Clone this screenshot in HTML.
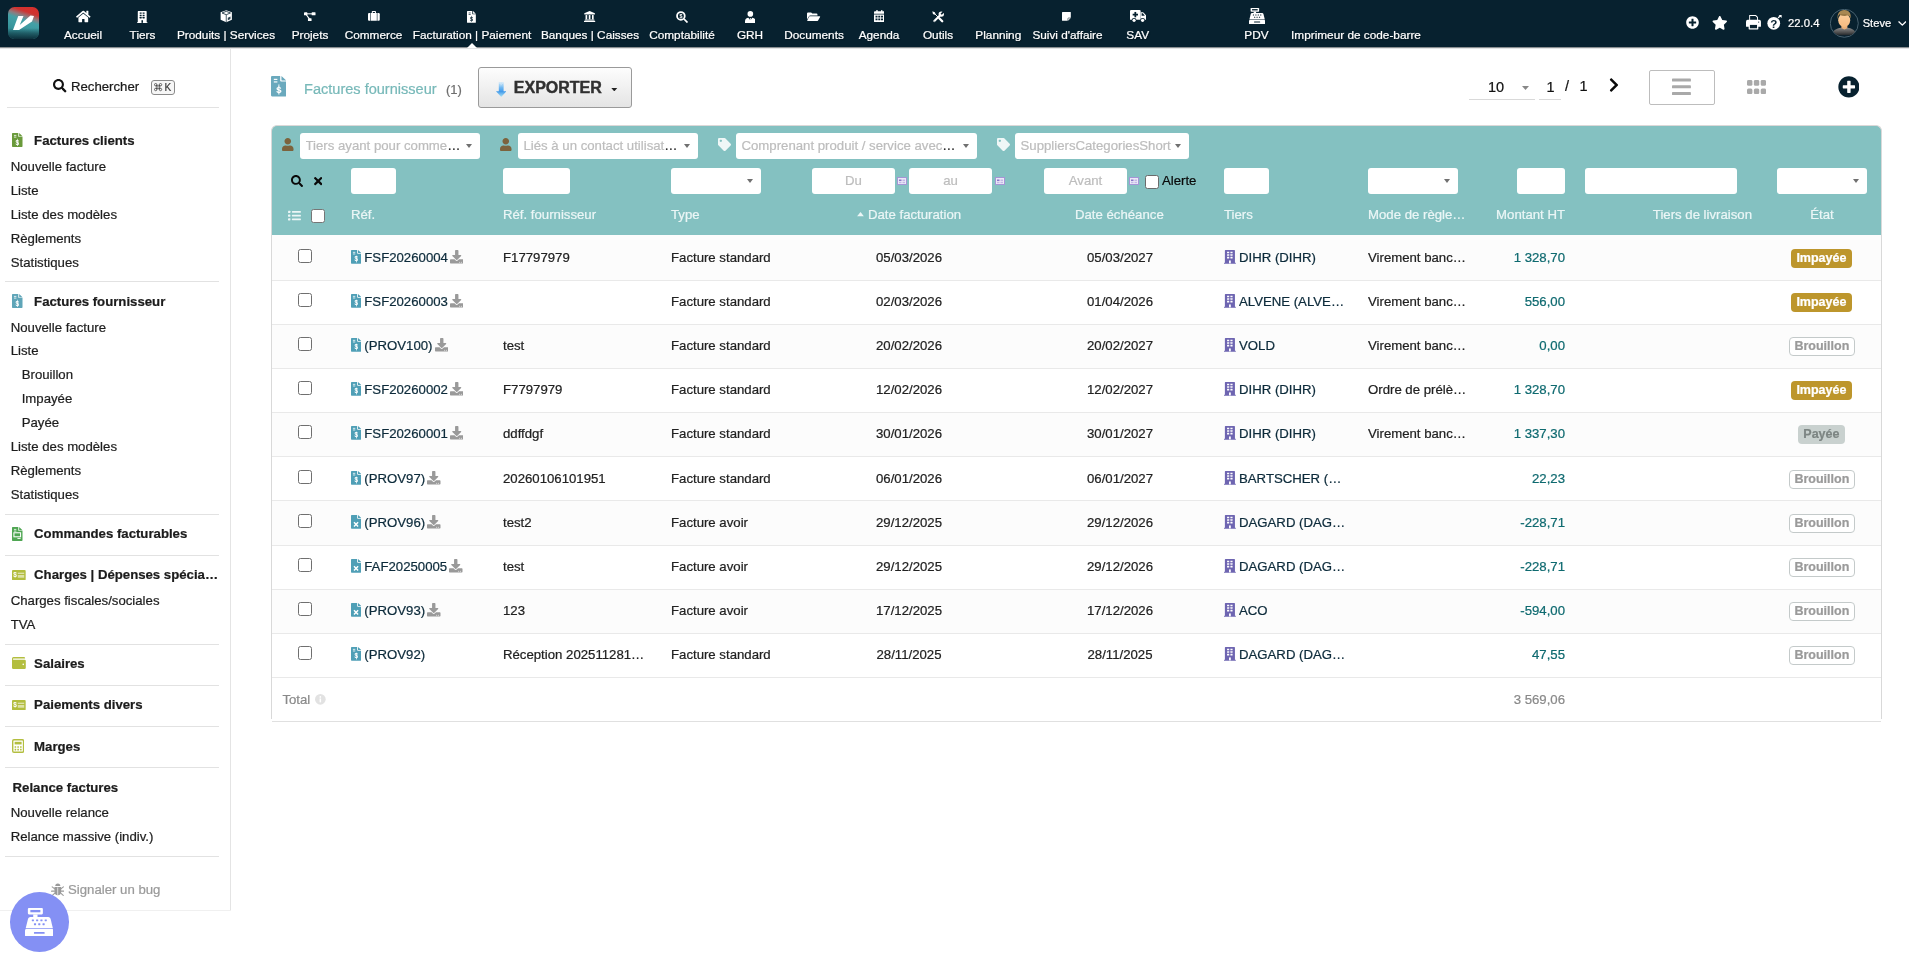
<!DOCTYPE html>
<html lang="fr"><head><meta charset="utf-8"><title>Factures fournisseur</title>
<style>
html,body{margin:0;padding:0;}
body{width:1909px;height:960px;overflow:hidden;background:#fff;font-family:"Liberation Sans", sans-serif;position:relative;}
.t{position:absolute;white-space:nowrap;font-family:"Liberation Sans", sans-serif;-webkit-text-stroke:0.220px currentColor;}
.b{position:absolute;box-sizing:border-box;}
#app{position:absolute;left:0;top:0;width:1909px;height:960px;will-change:transform;}
.sh{text-shadow:1px 1px 1px rgba(0,0,0,.35);}
</style></head>
<body>
<div id="app">
<header id="topmenu">
<div class="b" style="left:0px;top:0px;width:1909px;height:47px;background:#07212f;"></div>
<div class="b" style="left:0px;top:47px;width:1909px;height:1px;background:#8a8f92;"></div>
<div class="b" style="left:0px;top:48px;width:1909px;height:1px;background:#e3e4e5;"></div>
<svg class="b" style="left:8px;top:7px" width="31" height="32" viewBox="0 0 31 32">
<defs><linearGradient id="lg" x1="0.66" y1="0" x2="0.33" y2="1">
<stop offset="0" stop-color="#d3302d"/><stop offset="0.15" stop-color="#cf3330"/><stop offset="0.29" stop-color="#8f7a7e"/><stop offset="0.41" stop-color="#44a0a6"/><stop offset="0.62" stop-color="#3c9aa1"/><stop offset="1" stop-color="#2d858c"/></linearGradient>
<linearGradient id="lg2" x1="0" y1="0" x2="0" y2="1"><stop offset="0.66" stop-color="#0b2a36" stop-opacity="0"/><stop offset="0.82" stop-color="#0d313c" stop-opacity=".55"/><stop offset="1" stop-color="#0a2733" stop-opacity=".92"/></linearGradient>
<clipPath id="lc"><rect x="0" y="0" width="31" height="32" rx="6.500"/></clipPath></defs>
<g clip-path="url(#lc)"><rect x="0" y="0" width="31" height="32" fill="url(#lg)"/><rect x="0" y="0" width="31" height="32" fill="url(#lg2)"/></g>
<path d="M10.250 9h5.250l-3.750 9 10.750-9.400 3.500.400-2 5.500-13 8.500H5z" fill="#fff"/>
</svg>
<div class="t sh" style="top:25px;font-size:11.8px;line-height:20px;color:#ffffff;left:-117px;width:400px;text-align:center;">Accueil</div>
<svg class="b" style="left:76px;top:9.5px;" width="14.62" height="13" viewBox="0 0 576 512" fill="#ffffff"><path d="M280.370 148.260L96 300.110V464a16 16 0 0 0 16 16l112.060-.290a16 16 0 0 0 15.920-16V368a16 16 0 0 1 16-16h64a16 16 0 0 1 16 16v95.640a16 16 0 0 0 16 16.050L464 480a16 16 0 0 0 16-16V300L295.670 148.260a12.190 12.190 0 0 0-15.300 0zM571.600 251.470L488 182.560V44.050a12 12 0 0 0-12-12h-56a12 12 0 0 0-12 12v72.610L318.470 43a48 48 0 0 0-61 0L4.340 251.470a12 12 0 0 0-1.600 16.900l25.500 31A12 12 0 0 0 45.150 301l235.220-193.740a12.190 12.190 0 0 1 15.300 0L530.900 301a12 12 0 0 0 16.900-1.600l25.500-31a12 12 0 0 0-1.700-16.930z"/></svg>
<div class="t sh" style="top:25px;font-size:11.8px;line-height:20px;color:#ffffff;left:-57.5px;width:400px;text-align:center;">Tiers</div>
<svg class="b" style="left:137.3px;top:10.5px;" width="10.46" height="12.2" viewBox="0 0 120 140" fill="#ffffff"><path d="M14 0h92a5 5 0 0 1 5 5v124h6a3 3 0 0 1 3 3v8H0v-8a3 3 0 0 1 3-3h6V5a5 5 0 0 1 5-5z"/><rect x="31" y="17" width="22" height="16" rx="2" fill="#07212f"/><rect x="65" y="17" width="22" height="16" rx="2" fill="#07212f"/><rect x="31" y="43" width="22" height="16" rx="2" fill="#07212f"/><rect x="65" y="43" width="22" height="16" rx="2" fill="#07212f"/><rect x="31" y="69" width="22" height="16" rx="2" fill="#07212f"/><rect x="65" y="69" width="22" height="16" rx="2" fill="#07212f"/><rect x="51" y="106" width="18" height="30" fill="#07212f"/></svg>
<div class="t sh" style="top:25px;font-size:11.8px;line-height:20px;color:#ffffff;left:26px;width:400px;text-align:center;">Produits | Services</div>
<svg class="b" style="left:220px;top:10px;" width="12.5" height="12.5" viewBox="0 0 160 160" fill="#ffffff"><path d="M80 2l72 28v94l-72 34-72-34V30z"/><path d="M26 38l54-21 54 21-54 22z" fill="none" stroke="#07212f" stroke-width="10"/><path d="M80 62v92" fill="none" stroke="#07212f" stroke-width="9"/><path d="M100 98l34-16v34l-34 16z" fill="#07212f" opacity=".85"/></svg>
<div class="t sh" style="top:25px;font-size:11.8px;line-height:20px;color:#ffffff;left:110px;width:400px;text-align:center;">Projets</div>
<svg class="b" style="left:304px;top:11.6px;" width="12.0" height="9.6" viewBox="0 0 200 160" fill="#ffffff"><rect x="0" y="6" width="56" height="50" rx="8"/><rect x="128" y="6" width="64" height="50" rx="8"/><rect x="66" y="104" width="60" height="52" rx="8"/><rect x="50" y="22" width="84" height="17"/><path d="M30 52l16-10 52 68-16 10z"/></svg>
<div class="t sh" style="top:25px;font-size:11.8px;line-height:20px;color:#ffffff;left:173.5px;width:400px;text-align:center;">Commerce</div>
<svg class="b" style="left:367.8px;top:11px;" width="11.76" height="9.8" viewBox="0 0 180 150" fill="#ffffff"><path d="M58 12a12 12 0 0 1 12-12h40a12 12 0 0 1 12 12v24h-16V16H74v20H58z"/><rect x="0" y="32" width="180" height="118" rx="16"/><rect x="36" y="30" width="9" height="122" fill="#07212f"/><rect x="135" y="30" width="9" height="122" fill="#07212f"/></svg>
<div class="t sh" style="top:25px;font-size:11.8px;line-height:20px;color:#ffffff;left:272px;width:400px;text-align:center;">Facturation | Paiement</div>
<svg class="b" style="left:467.2px;top:10.8px;" width="8.85" height="11.8" viewBox="0 0 120 160" fill="#ffffff"><path d="M8 0h64v36a8 8 0 0 0 8 8h40v108a8 8 0 0 1-8 8H8a8 8 0 0 1-8-8V8a8 8 0 0 1 8-8zM82 0l38 36H86a4 4 0 0 1-4-4z"/><rect x="22" y="22" width="28" height="9" fill="#07212f"/><rect x="22" y="42" width="28" height="9" fill="#07212f"/><text x="62" y="134" font-family="Liberation Sans" font-weight="700" font-size="74" text-anchor="middle" fill="#07212f">$</text><rect x="58.500" y="66" width="7" height="80" fill="#07212f"/></svg>
<div class="t sh" style="top:25px;font-size:11.8px;line-height:20px;color:#ffffff;left:390px;width:400px;text-align:center;">Banques | Caisses</div>
<svg class="b" style="left:584.4px;top:11.2px;" width="11.2" height="11.2" viewBox="0 0 160 160" fill="#ffffff"><path d="M80 0l76 32v18H4V32z"/><rect x="22" y="58" width="24" height="62"/><rect x="68" y="58" width="24" height="62"/><rect x="114" y="58" width="24" height="62"/><rect x="12" y="122" width="136" height="14"/><rect x="0" y="140" width="160" height="18" rx="4"/></svg>
<div class="t sh" style="top:25px;font-size:11.8px;line-height:20px;color:#ffffff;left:482px;width:400px;text-align:center;">Comptabilité</div>
<svg class="b" style="left:676px;top:10.5px;" width="12" height="12" viewBox="0 0 162 162" fill="#ffffff"><circle cx="66" cy="66" r="52" fill="none" stroke="#ffffff" stroke-width="24"/><path d="M100 116l16-16 42 42a8 8 0 0 1 0 11l-5 5a8 8 0 0 1-11 0z"/><text x="66" y="92" font-family="Liberation Sans" font-weight="700" font-size="72" text-anchor="middle">$</text></svg>
<div class="t sh" style="top:25px;font-size:11.8px;line-height:20px;color:#ffffff;left:550px;width:400px;text-align:center;">GRH</div>
<svg class="b" style="left:744.6px;top:10.5px;" width="10.68" height="12.2" viewBox="0 0 140 160" fill="#ffffff"><circle cx="70" cy="38" r="37"/><path d="M0 160v-26c0-27 20-44 44-46l26 34 26-34c24 2 44 19 44 46v26z"/><path d="M62 92h16l-4 13 7 32-11 12-11-12 7-32z"/></svg>
<div class="t sh" style="top:25px;font-size:11.8px;line-height:20px;color:#ffffff;left:614px;width:400px;text-align:center;">Documents</div>
<svg class="b" style="left:807.4px;top:11.6px;" width="13.29" height="9.3" viewBox="0 0 200 140" fill="#ffffff"><path d="M0 112V22A16 16 0 0 1 16 6h46l18 18h62a16 16 0 0 1 16 16v14H50a26 26 0 0 0-23 13z"/><path d="M40 64h150a8 8 0 0 1 7 12l-30 52a16 16 0 0 1-14 8H8a5 5 0 0 1-4-8l26-56a12 12 0 0 1 10-8z"/></svg>
<div class="t sh" style="top:25px;font-size:11.8px;line-height:20px;color:#ffffff;left:679px;width:400px;text-align:center;">Agenda</div>
<svg class="b" style="left:873.7px;top:10.3px;" width="10.68" height="12.2" viewBox="0 0 140 160" fill="#ffffff"><rect x="30" y="0" width="18" height="34" rx="5"/><rect x="92" y="0" width="18" height="34" rx="5"/><path d="M12 16h116a12 12 0 0 1 12 12v20H0V28a12 12 0 0 1 12-12zM0 58h140v90a12 12 0 0 1-12 12H12a12 12 0 0 1-12-12z"/><rect x="20" y="74" width="26" height="24" rx="3" fill="#07212f"/><rect x="56" y="74" width="26" height="24" rx="3" fill="#07212f"/><rect x="92" y="74" width="26" height="24" rx="3" fill="#07212f"/><rect x="20" y="110" width="26" height="24" rx="3" fill="#07212f"/><rect x="56" y="110" width="26" height="24" rx="3" fill="#07212f"/><rect x="92" y="110" width="26" height="24" rx="3" fill="#07212f"/></svg>
<div class="t sh" style="top:25px;font-size:11.8px;line-height:20px;color:#ffffff;left:738px;width:400px;text-align:center;">Outils</div>
<svg class="b" style="left:931.7px;top:10.6px;" width="12.4" height="12.4" viewBox="0 0 160 160" fill="#ffffff"><g stroke="#ffffff" fill="none" stroke-linecap="round"><path d="M112 48L30 130" stroke-width="27"/><path d="M94 94L132 132" stroke-width="30"/><path d="M34 34L88 88" stroke-width="12" stroke-linecap="butt"/></g><path d="M4 4l32 12 10 22-14 12-20-12z"/><circle cx="120" cy="40" r="35"/><path d="M110 34l16 16 44-44-16-16z" fill="#07212f"/><circle cx="29" cy="131" r="6" fill="#07212f"/></svg>
<div class="t sh" style="top:25px;font-size:11.8px;line-height:20px;color:#ffffff;left:798.3px;width:400px;text-align:center;">Planning</div>
<div class="t sh" style="top:25px;font-size:11.8px;line-height:20px;color:#ffffff;left:867.5px;width:400px;text-align:center;">Suivi d'affaire</div>
<svg class="b" style="left:1061.8px;top:12.4px;" width="8.8" height="8.8" viewBox="0 0 140 140" fill="#ffffff"><path d="M8 0h124a8 8 0 0 1 8 8v88l-44 44H8a8 8 0 0 1-8-8V8a8 8 0 0 1 8-8z"/><path d="M94 142V104a8 8 0 0 1 8-8h40" fill="none" stroke="#07212f" stroke-width="9"/></svg>
<div class="t sh" style="top:25px;font-size:11.8px;line-height:20px;color:#ffffff;left:937.7px;width:400px;text-align:center;">SAV</div>
<svg class="b" style="left:1129.7px;top:9.5px;" width="16.5" height="12.6" viewBox="0 0 186 142" fill="#ffffff"><path d="M12 0h96a12 12 0 0 1 12 12v98H0V12A12 12 0 0 1 12 0z"/><path d="M120 26h26a12 12 0 0 1 9 4l28 32a12 12 0 0 1 3 8v40h-66z"/><path d="M131 38h14l22 26h-36z" fill="#07212f"/><rect x="50" y="22" width="20" height="60" fill="#07212f"/><rect x="30" y="42" width="60" height="20" fill="#07212f"/><circle cx="46" cy="116" r="27" fill="#07212f"/><circle cx="142" cy="116" r="27" fill="#07212f"/><circle cx="46" cy="116" r="18"/><circle cx="142" cy="116" r="18"/></svg>
<div class="t sh" style="top:25px;font-size:11.8px;line-height:20px;color:#ffffff;left:1056.5px;width:400px;text-align:center;">PDV</div>
<svg class="b" style="left:1248.9px;top:8px;" width="16.2" height="16.2" viewBox="0 0 160 160" fill="#ffffff"><rect x="16" y="0" width="84" height="36" rx="6"/><rect x="30" y="11" width="56" height="13" fill="#07212f"/><rect x="46" y="36" width="24" height="18"/><path d="M30 50h100a14 14 0 0 1 13 10l13 54H4l13-54a14 14 0 0 1 13-10z"/><path d="M8 118h144a8 8 0 0 1 8 8v26a8 8 0 0 1-8 8H8a8 8 0 0 1-8-8v-26a8 8 0 0 1 8-8z"/><rect x="50" y="134" width="60" height="10" rx="3" fill="#07212f"/><rect x="38" y="64" width="12" height="10" rx="2" fill="#07212f"/><rect x="62" y="64" width="12" height="10" rx="2" fill="#07212f"/><rect x="86" y="64" width="12" height="10" rx="2" fill="#07212f"/><rect x="110" y="64" width="12" height="10" rx="2" fill="#07212f"/><rect x="50" y="86" width="12" height="10" rx="2" fill="#07212f"/><rect x="74" y="86" width="12" height="10" rx="2" fill="#07212f"/><rect x="98" y="86" width="12" height="10" rx="2" fill="#07212f"/></svg>
<div class="t sh" style="top:25px;font-size:11.8px;line-height:20px;color:#ffffff;left:1156px;width:400px;text-align:center;">Imprimeur de code-barre</div>
<svg class="b" style="left:467px;top:42.5px;" width="10" height="5" viewBox="0 0 10 5" fill="#fff"><path d="M0 5L5 0l5 5z"/></svg>
<svg class="b" style="left:1686px;top:16px;" width="13.0" height="13" viewBox="0 0 512 512" fill="#ffffff"><path d="M256 8C119 8 8 119 8 256s111 248 248 248 248-111 248-248S393 8 256 8zm144 276c0 6.600-5.400 12-12 12h-92v92c0 6.600-5.400 12-12 12h-56c-6.600 0-12-5.400-12-12v-92h-92c-6.600 0-12-5.400-12-12v-56c0-6.600 5.400-12 12-12h92v-92c0-6.600 5.400-12 12-12h56c6.600 0 12 5.400 12 12v92h92c6.600 0 12 5.400 12 12v56z"/></svg>
<svg class="b" style="left:1712px;top:16px;" width="15.53" height="13.8" viewBox="0 0 576 512" fill="#ffffff"><path d="M259.3 17.8L194 150.2 47.9 171.5c-26.2 3.8-36.7 36.1-17.7 54.6l105.7 103-25 145.5c-4.5 26.3 23.2 46 46.4 33.7L288 439.6l130.7 68.7c23.2 12.2 50.9-7.4 46.4-33.7l-25-145.5 105.7-103c19-18.500 8.500-50.800-17.700-54.600L382 150.200 316.700 17.800c-11.700-23.600-45.600-23.900-57.400 0z"/></svg>
<svg class="b" style="left:1745.8px;top:15.4px;" width="14.96" height="14.4" viewBox="0 0 160 154" fill="#ffffff"><path d="M34 0h72l22 22v34H34z"/><path d="M44 10h56l18 18v28H44z" fill="#07212f"/><path d="M18 52h124a18 18 0 0 1 18 18v50a6 6 0 0 1-6 6H6a6 6 0 0 1-6-6V70a18 18 0 0 1 18-18z"/><rect x="28" y="92" width="104" height="62" rx="6"/><rect x="42" y="106" width="76" height="36" fill="#07212f"/><circle cx="136" cy="76" r="6" fill="#07212f"/></svg>
<svg class="b" style="left:1767.2px;top:14.8px;" width="15.0" height="15" viewBox="0 0 160 160" fill="#ffffff"><circle cx="72" cy="88" r="68"/><text x="72" y="134" font-family="Liberation Sans" font-weight="700" font-size="124" text-anchor="middle" fill="#07212f">?</text><path d="M118 30l30-22" stroke="#ffffff" stroke-width="14" fill="none"/><path d="M124 0h32v32z"/></svg>
<div class="t sh" style="top:13px;font-size:11.3px;line-height:20px;color:#ffffff;left:1788px;">22.0.4</div>
<svg class="b" style="left:1830.200px;top:9px" width="28.600" height="28.600" viewBox="0 0 286 286">
<defs><clipPath id="av"><circle cx="143" cy="143" r="136"/></clipPath>
<linearGradient id="sk" x1="0" y1="0" x2="0" y2="1"><stop offset="0" stop-color="#fdcf9c"/><stop offset="1" stop-color="#f6bb80"/></linearGradient>
<linearGradient id="bd" x1="0" y1="0" x2="0" y2="1"><stop offset="0" stop-color="#8a8a8a"/><stop offset="0.65" stop-color="#4c4c4c"/><stop offset="1" stop-color="#23282c"/></linearGradient></defs>
<circle cx="143" cy="143" r="140" fill="none" stroke="#4f6977" stroke-width="9"/>
<g clip-path="url(#av)">
<path d="M22 262c0-46 38-66 92-74l29 12 31-12c52 8 86 28 86 74z" fill="url(#bd)"/>
<path d="M114 168h60v24l-30 12-30-12z" fill="#eab079"/>
<ellipse cx="142" cy="113" rx="60" ry="68" fill="url(#sk)"/>
<path d="M78 102C66 44 100 6 146 9c46 2 70 38 59 88-4-22-16-34-34-34-22 12-58 4-78-10-9 10-13 28-15 49z" fill="#a98852"/>
<path d="M93 53c20 14 56 22 78 10 8 0 15 3 20 8-10-16-30-22-50-22-18 0-36 0-48 4z" fill="#8f7040" opacity=".6"/>
</g></svg>
<div class="t sh" style="top:13px;font-size:11.15px;line-height:20px;color:#ffffff;left:1862.7px;">Steve</div>
<svg class="b" style="left:1897.7px;top:20.7px;" width="8.6" height="5.159999999999999" viewBox="0 0 100 60" fill="none"><path d="M10 10l40 38 40-38" fill="none" stroke="#ffffff" stroke-width="16" stroke-linecap="round" stroke-linejoin="round"/></svg>
</header>
<aside id="leftmenu">
<div class="b" style="left:230px;top:49px;width:1px;height:861px;background:#e4e4e4;"></div>
<div class="b" style="left:0px;top:910px;width:231px;height:1px;background:#f0f0f0;"></div>
<svg class="b" style="left:53px;top:79.3px;" width="13.5" height="13.5" viewBox="0 0 512 512" fill="#111"><path d="M505 442.7L405.3 343c-4.5-4.5-10.6-7-17-7H372c27.6-35.3 44-79.7 44-128C416 93.1 322.9 0 208 0S0 93.1 0 208s93.1 208 208 208c48.3 0 92.7-16.4 128-44v16.3c0 6.4 2.5 12.5 7 17l99.7 99.7c9.4 9.4 24.6 9.4 33.9 0l28.3-28.3c9.4-9.4 9.4-24.6.1-34zM208 336c-70.7 0-128-57.2-128-128 0-70.7 57.2-128 128-128 70.7 0 128 57.2 128 128 0 70.7-57.2 128-128 128z"/></svg>
<div class="t " style="top:77px;font-size:13.2px;line-height:20px;color:#1a1a1a;left:71px;">Rechercher</div>
<div class="b" style="left:151px;top:80px;width:24px;height:15px;border:1px solid #8a8a8a;border-radius:3px;background:#f6f6f6;"></div>
<svg class="b" style="left:154.4px;top:83.4px;" width="8.2" height="8.2" viewBox="-0.800 -0.800 13.600 13.600" fill="none"><g fill="none" stroke="#3c3c3c" stroke-width="1.250"><circle cx="2" cy="2" r="2"/><circle cx="10" cy="2" r="2"/><circle cx="2" cy="10" r="2"/><circle cx="10" cy="10" r="2"/><path d="M4 2V10M8 2V10M2 4H10M2 8H10"/></g></svg>
<div class="t " style="top:78px;font-size:10px;line-height:20px;color:#3c3c3c;left:164.4px;">K</div>
<div class="b" style="left:7px;top:107px;width:212px;height:1px;background:#e2e2e2;"></div>
<svg class="b" style="left:12px;top:133px;" width="10.5" height="14" viewBox="0 0 120 160" fill="#6a9a3b"><path d="M8 0h64v36a8 8 0 0 0 8 8h40v108a8 8 0 0 1-8 8H8a8 8 0 0 1-8-8V8a8 8 0 0 1 8-8zM82 0l38 36H86a4 4 0 0 1-4-4z"/><rect x="22" y="22" width="28" height="9" fill="#fff"/><rect x="22" y="42" width="28" height="9" fill="#fff"/><text x="62" y="134" font-family="Liberation Sans" font-weight="700" font-size="74" text-anchor="middle" fill="#fff">$</text><rect x="58.500" y="66" width="7" height="80" fill="#fff"/></svg>
<div class="t " style="top:131px;font-size:13.2px;line-height:20px;color:#1c1c1c;font-weight:700;left:34.1px;width:184.9px;overflow:hidden;text-overflow:ellipsis;">Factures clients</div>
<div class="t " style="top:157px;font-size:13.2px;line-height:20px;color:#1e1e1e;left:10.7px;">Nouvelle facture</div>
<div class="t " style="top:181px;font-size:13.2px;line-height:20px;color:#1e1e1e;left:10.7px;">Liste</div>
<div class="t " style="top:205px;font-size:13.2px;line-height:20px;color:#1e1e1e;left:10.7px;">Liste des modèles</div>
<div class="t " style="top:229px;font-size:13.2px;line-height:20px;color:#1e1e1e;left:10.7px;">Règlements</div>
<div class="t " style="top:253px;font-size:13.2px;line-height:20px;color:#1e1e1e;left:10.7px;">Statistiques</div>
<div class="b" style="left:5px;top:281px;width:214px;height:1px;background:#e2e2e2;"></div>
<svg class="b" style="left:12px;top:294px;" width="10.5" height="14" viewBox="0 0 120 160" fill="#5fa5b8"><path d="M8 0h64v36a8 8 0 0 0 8 8h40v108a8 8 0 0 1-8 8H8a8 8 0 0 1-8-8V8a8 8 0 0 1 8-8zM82 0l38 36H86a4 4 0 0 1-4-4z"/><rect x="22" y="22" width="28" height="9" fill="#fff"/><rect x="22" y="42" width="28" height="9" fill="#fff"/><text x="62" y="134" font-family="Liberation Sans" font-weight="700" font-size="74" text-anchor="middle" fill="#fff">$</text><rect x="58.500" y="66" width="7" height="80" fill="#fff"/></svg>
<div class="t " style="top:292px;font-size:13.2px;line-height:20px;color:#1c1c1c;font-weight:700;left:34.1px;width:184.9px;overflow:hidden;text-overflow:ellipsis;">Factures fournisseur</div>
<div class="t " style="top:318px;font-size:13.2px;line-height:20px;color:#1e1e1e;left:10.7px;">Nouvelle facture</div>
<div class="t " style="top:341px;font-size:13.2px;line-height:20px;color:#1e1e1e;left:10.7px;">Liste</div>
<div class="t " style="top:365px;font-size:13.2px;line-height:20px;color:#1e1e1e;left:21.7px;">Brouillon</div>
<div class="t " style="top:389px;font-size:13.2px;line-height:20px;color:#1e1e1e;left:21.7px;">Impayée</div>
<div class="t " style="top:413px;font-size:13.2px;line-height:20px;color:#1e1e1e;left:21.7px;">Payée</div>
<div class="t " style="top:437px;font-size:13.2px;line-height:20px;color:#1e1e1e;left:10.7px;">Liste des modèles</div>
<div class="t " style="top:461px;font-size:13.2px;line-height:20px;color:#1e1e1e;left:10.7px;">Règlements</div>
<div class="t " style="top:485px;font-size:13.2px;line-height:20px;color:#1e1e1e;left:10.7px;">Statistiques</div>
<div class="b" style="left:5px;top:514px;width:214px;height:1px;background:#e2e2e2;"></div>
<svg class="b" style="left:12px;top:526.5px;" width="10.5" height="14" viewBox="0 0 120 160" fill="#4fa653"><path d="M8 0h64v36a8 8 0 0 0 8 8h40v108a8 8 0 0 1-8 8H8a8 8 0 0 1-8-8V8a8 8 0 0 1 8-8zM82 0l38 36H86a4 4 0 0 1-4-4z"/><rect x="22" y="22" width="28" height="9" fill="#fff"/><rect x="22" y="42" width="28" height="9" fill="#fff"/><rect x="22" y="66" width="76" height="46" fill="none" stroke="#fff" stroke-width="12"/><rect x="62" y="126" width="36" height="10" fill="#fff"/></svg>
<div class="t " style="top:524px;font-size:13.2px;line-height:20px;color:#1c1c1c;font-weight:700;left:34.1px;width:184.9px;overflow:hidden;text-overflow:ellipsis;">Commandes facturables</div>
<div class="b" style="left:5px;top:555px;width:214px;height:1px;background:#e2e2e2;"></div>
<svg class="b" style="left:12px;top:569.8px;" width="13.68" height="10.3" viewBox="0 0 170 128" fill="#b3be3f"><rect x="0" y="0" width="170" height="128" rx="12"/><text x="38" y="92" font-family="Liberation Sans" font-weight="700" font-size="80" text-anchor="middle" fill="#fff">$</text><rect x="72" y="34" width="80" height="12" fill="#fff" opacity=".8"/><rect x="72" y="62" width="80" height="34" fill="#fff" opacity=".55"/></svg>
<div class="t " style="top:565px;font-size:13.2px;line-height:20px;color:#1c1c1c;font-weight:700;left:34.1px;width:184.9px;overflow:hidden;text-overflow:ellipsis;">Charges | Dépenses spéciales</div>
<div class="t " style="top:591px;font-size:13.2px;line-height:20px;color:#1e1e1e;left:10.7px;">Charges fiscales/sociales</div>
<div class="t " style="top:615px;font-size:13.2px;line-height:20px;color:#1e1e1e;left:10.7px;">TVA</div>
<div class="b" style="left:5px;top:644px;width:214px;height:1px;background:#e2e2e2;"></div>
<svg class="b" style="left:12px;top:657px;" width="13.8" height="12" viewBox="0 0 184 160" fill="#b3be3f"><path d="M20 0h140a14 14 0 0 1 14 14v6H20a8 8 0 0 0 0 16h148a16 16 0 0 1 16 16v92a16 16 0 0 1-16 16H18a18 18 0 0 1-18-18V20A20 20 0 0 1 20 0z"/><circle cx="150" cy="98" r="11" fill="#fff"/></svg>
<div class="t " style="top:654px;font-size:13.2px;line-height:20px;color:#1c1c1c;font-weight:700;left:34.1px;width:184.9px;overflow:hidden;text-overflow:ellipsis;">Salaires</div>
<div class="b" style="left:5px;top:685px;width:214px;height:1px;background:#e2e2e2;"></div>
<svg class="b" style="left:12px;top:699.8px;" width="13.68" height="10.3" viewBox="0 0 170 128" fill="#b3be3f"><rect x="0" y="0" width="170" height="128" rx="12"/><text x="38" y="92" font-family="Liberation Sans" font-weight="700" font-size="80" text-anchor="middle" fill="#fff">$</text><rect x="72" y="34" width="80" height="12" fill="#fff" opacity=".8"/><rect x="72" y="62" width="80" height="34" fill="#fff" opacity=".55"/></svg>
<div class="t " style="top:695px;font-size:13.2px;line-height:20px;color:#1c1c1c;font-weight:700;left:34.1px;width:184.9px;overflow:hidden;text-overflow:ellipsis;">Paiements divers</div>
<div class="b" style="left:5px;top:726px;width:214px;height:1px;background:#e2e2e2;"></div>
<svg class="b" style="left:12px;top:739px;" width="12.25" height="14" viewBox="0 0 140 160" fill="#b3be3f"><rect x="8" y="8" width="124" height="144" rx="14" fill="none" stroke="#b3be3f" stroke-width="16"/><rect x="30" y="32" width="80" height="30"/><rect x="30" y="82" width="18" height="18" rx="3"/><rect x="61" y="82" width="18" height="18" rx="3"/><rect x="92" y="82" width="18" height="18" rx="3"/><rect x="30" y="112" width="18" height="18" rx="3"/><rect x="61" y="112" width="18" height="18" rx="3"/><rect x="92" y="112" width="18" height="18" rx="3"/></svg>
<div class="t " style="top:737px;font-size:13.2px;line-height:20px;color:#1c1c1c;font-weight:700;left:34.1px;width:184.9px;overflow:hidden;text-overflow:ellipsis;">Marges</div>
<div class="b" style="left:5px;top:767px;width:214px;height:1px;background:#e2e2e2;"></div>
<div class="t " style="top:778px;font-size:13.2px;line-height:20px;color:#1c1c1c;font-weight:700;left:12.6px;width:206.4px;overflow:hidden;text-overflow:ellipsis;">Relance factures</div>
<div class="t " style="top:803px;font-size:13.2px;line-height:20px;color:#1e1e1e;left:10.7px;">Nouvelle relance</div>
<div class="t " style="top:827px;font-size:13.2px;line-height:20px;color:#1e1e1e;left:10.7px;">Relance massive (indiv.)</div>
<div class="b" style="left:5px;top:856px;width:214px;height:1px;background:#e2e2e2;"></div>
<svg class="b" style="left:50.8px;top:882.5px;" width="13.6" height="13.6" viewBox="0 0 160 160" fill="#9a9a9a"><path d="M50 36a30 30 0 0 1 60 0z"/><path d="M40 48h80a0 0 0 0 1 0 0v56a40 40 0 0 1-80 0z"/><g stroke="#9a9a9a" stroke-width="13" stroke-linecap="round" fill="none"><path d="M40 66L14 46M120 66l26-20M38 96H6M122 96h32M42 122l-26 24M118 122l26 24"/></g><rect x="76" y="52" width="8" height="88" fill="#fff"/></svg>
<div class="t " style="top:880px;font-size:13.2px;line-height:20px;color:#9a9a9a;left:68px;">Signaler un bug</div>
<div class="b" style="left:10px;top:892px;width:59.4px;height:60px;border-radius:50%;background:#8490f4;"></div>
<svg class="b" style="left:24.6px;top:907.8px;" width="28.6" height="28.6" viewBox="0 0 160 160" fill="#fff"><rect x="16" y="0" width="84" height="36" rx="6"/><rect x="30" y="11" width="56" height="13" fill="#8490f4"/><rect x="46" y="36" width="24" height="18"/><path d="M30 50h100a14 14 0 0 1 13 10l13 54H4l13-54a14 14 0 0 1 13-10z"/><path d="M8 118h144a8 8 0 0 1 8 8v26a8 8 0 0 1-8 8H8a8 8 0 0 1-8-8v-26a8 8 0 0 1 8-8z"/><rect x="50" y="134" width="60" height="10" rx="3" fill="#8490f4"/><rect x="38" y="64" width="12" height="10" rx="2" fill="#8490f4"/><rect x="62" y="64" width="12" height="10" rx="2" fill="#8490f4"/><rect x="86" y="64" width="12" height="10" rx="2" fill="#8490f4"/><rect x="110" y="64" width="12" height="10" rx="2" fill="#8490f4"/><rect x="50" y="86" width="12" height="10" rx="2" fill="#8490f4"/><rect x="74" y="86" width="12" height="10" rx="2" fill="#8490f4"/><rect x="98" y="86" width="12" height="10" rx="2" fill="#8490f4"/></svg>
</aside>
<main id="content">
<svg class="b" style="left:271.1px;top:76.3px;" width="15.3" height="20.4" viewBox="0 0 120 160" fill="#6aa9bd"><path d="M8 0h64v36a8 8 0 0 0 8 8h40v108a8 8 0 0 1-8 8H8a8 8 0 0 1-8-8V8a8 8 0 0 1 8-8zM82 0l38 36H86a4 4 0 0 1-4-4z"/><rect x="22" y="22" width="28" height="9" fill="#fff"/><rect x="22" y="42" width="28" height="9" fill="#fff"/><text x="62" y="134" font-family="Liberation Sans" font-weight="700" font-size="74" text-anchor="middle" fill="#fff">$</text><rect x="58.500" y="66" width="7" height="80" fill="#fff"/></svg>
<div class="t " style="top:79px;font-size:14.55px;line-height:20px;color:#78b9b9;left:304px;">Factures fournisseur</div>
<div class="t " style="top:80px;font-size:13px;line-height:20px;color:#6e6e6e;left:446px;">(1)</div>
<div class="b" style="left:478px;top:67px;width:154px;height:41px;border:1px solid #9a9a9a;border-radius:3px;background:linear-gradient(#fdfdfd,#e4e4e4);"></div>
<svg class="b" style="left:495.7px;top:82px;" width="10.4" height="15" viewBox="0 0 104 150" fill="none"><defs><linearGradient id="exg" x1="0" y1="0" x2="0" y2="1"><stop offset="0" stop-color="#3d97ea"/><stop offset="1" stop-color="#aee3f3"/></linearGradient><linearGradient id="exs" x1="0" y1="0" x2="0" y2="1"><stop offset="0" stop-color="#d6eaf8"/><stop offset="0.45" stop-color="#7ec0f3"/><stop offset="1" stop-color="#3d97ea"/></linearGradient></defs><rect x="28" y="0" width="48" height="100" fill="url(#exs)"/><rect x="36" y="6" width="10" height="10" fill="#fff" opacity=".7"/><rect x="56" y="6" width="10" height="10" fill="#fff" opacity=".7"/><rect x="46" y="22" width="10" height="10" fill="#fff" opacity=".6"/><rect x="36" y="36" width="10" height="8" fill="#fff" opacity=".35"/><rect x="56" y="36" width="10" height="8" fill="#fff" opacity=".35"/><path d="M0 92h104l-52 58z" fill="url(#exg)"/></svg>
<div class="t " style="top:78px;font-size:16px;line-height:20px;color:#303030;font-weight:700;left:513.8px;-webkit-text-stroke:0.450px #303030;">EXPORTER</div>
<svg class="b" style="left:611.2px;top:87.8px;" width="6.6" height="3.4" viewBox="0 0 7 4" fill="#222"><path d="M0 0h7L3.500 4z"/></svg>
<div class="t " style="top:77px;font-size:14.5px;line-height:20px;color:#111;left:1488px;">10</div>
<svg class="b" style="left:1522px;top:86px;" width="7" height="4" viewBox="0 0 7 4" fill="#888"><path d="M0 0h7L3.500 4z"/></svg>
<div class="b" style="left:1469px;top:99px;width:66px;height:1px;background:#d9d9d9;"></div>
<div class="t " style="top:77px;font-size:14.5px;line-height:20px;color:#111;left:1350.5px;width:400px;text-align:center;">1</div>
<div class="b" style="left:1539px;top:99px;width:22px;height:1px;background:#d9d9d9;"></div>
<div class="t " style="top:76px;font-size:14.5px;line-height:20px;color:#111;left:1367px;width:400px;text-align:center;">/</div>
<div class="t " style="top:76px;font-size:14.5px;line-height:20px;color:#111;left:1383.5px;width:400px;text-align:center;">1</div>
<svg class="b" style="left:1609.4px;top:77px;" width="10.0" height="16" viewBox="0 0 320 512" fill="#0a0a0a"><path d="M285.476 272.971L91.132 467.314c-9.373 9.373-24.569 9.373-33.941 0l-22.667-22.667c-9.357-9.357-9.375-24.522-.04-33.901L188.505 256 34.484 101.255c-9.335-9.379-9.317-24.544.04-33.901l22.667-22.667c9.373-9.373 24.569-9.373 33.941 0L285.475 239.030c9.373 9.372 9.373 24.568.001 33.941z"/></svg>
<div class="b" style="left:1648.6px;top:70px;width:66px;height:35px;border:1px solid #bdbdbd;border-radius:2px;background:#fff;"></div>
<svg class="b" style="left:1672.1px;top:76px;" width="18.9" height="21.6" viewBox="0 0 448 512" fill="#a9a9a9"><path d="M16 132h416c8.837 0 16-7.163 16-16V76c0-8.837-7.163-16-16-16H16C7.163 60 0 67.163 0 76v40c0 8.837 7.163 16 16 16zm0 160h416c8.837 0 16-7.163 16-16v-40c0-8.837-7.163-16-16-16H16c-8.837 0-16 7.163-16 16v40c0 8.837 7.163 16 16 16zm0 160h416c8.837 0 16-7.163 16-16v-40c0-8.837-7.163-16-16-16H16c-8.837 0-16 7.163-16 16v40c0 8.837 7.163 16 16 16z"/></svg>
<svg class="b" style="left:1746.7px;top:80.2px;" width="19.1" height="14.1" viewBox="0 0 191 141" fill="#a9a9a9"><rect x="0.0" y="0" width="54" height="57" rx="15"/><rect x="68.5" y="0" width="54" height="57" rx="15"/><rect x="137.0" y="0" width="54" height="57" rx="15"/><rect x="0.0" y="84" width="54" height="57" rx="15"/><rect x="68.5" y="84" width="54" height="57" rx="15"/><rect x="137.0" y="84" width="54" height="57" rx="15"/></svg>
<svg class="b" style="left:1837.5px;top:76.3px;" width="21.8" height="21.8" viewBox="0 0 512 512" fill="#07212f"><path d="M256 8C119 8 8 119 8 256s111 248 248 248 248-111 248-248S393 8 256 8zm144 276c0 6.600-5.400 12-12 12h-92v92c0 6.600-5.400 12-12 12h-56c-6.600 0-12-5.400-12-12v-92h-92c-6.600 0-12-5.400-12-12v-56c0-6.600 5.400-12 12-12h92v-92c0-6.600 5.400-12 12-12h56c6.600 0 12 5.400 12 12v92h92c6.600 0 12 5.400 12 12v56z"/></svg>
<div class="b" style="left:271px;top:125px;width:1611px;height:111px;background:#84c1c1;border-radius:6px 6px 0 0;border:1px solid #dcd8d8;border-bottom:none;"></div>
<svg class="b" style="left:282.2px;top:138px;" width="11.55" height="13.2" viewBox="0 0 448 512" fill="#7c633d"><path d="M224 256c70.700 0 128-57.300 128-128S294.700 0 224 0 96 57.300 96 128s57.300 128 128 128zm89.600 32h-16.700c-22.200 10.200-46.900 16-72.900 16s-50.600-5.800-72.900-16h-16.700C60.200 288 0 348.200 0 422.400V464c0 26.500 21.500 48 48 48h352c26.500 0 48-21.500 48-48v-41.600c0-74.200-60.200-134.400-134.400-134.400z"/></svg>
<div class="b" style="left:300px;top:133px;width:180px;height:26px;background:#fff;border-radius:3px;"></div>
<div class="t " style="top:136px;font-size:13.2px;line-height:20px;color:#222;left:305.5px;width:156.5px;overflow:hidden;text-overflow:ellipsis;"><span style="color:#bdbdbd">Tiers ayant pour commercial</span></div>
<svg class="b" style="left:466.3px;top:144.2px;" width="6" height="4" viewBox="0 0 6 4" fill="#707070"><path d="M0 0h6L3 4z"/></svg>
<svg class="b" style="left:500.2px;top:138px;" width="11.55" height="13.2" viewBox="0 0 448 512" fill="#7c633d"><path d="M224 256c70.700 0 128-57.300 128-128S294.700 0 224 0 96 57.300 96 128s57.300 128 128 128zm89.600 32h-16.700c-22.200 10.200-46.900 16-72.900 16s-50.600-5.800-72.900-16h-16.700C60.200 288 0 348.200 0 422.400V464c0 26.500 21.500 48 48 48h352c26.500 0 48-21.500 48-48v-41.600c0-74.200-60.200-134.400-134.400-134.400z"/></svg>
<div class="b" style="left:518px;top:133px;width:180px;height:26px;background:#fff;border-radius:3px;"></div>
<div class="t " style="top:136px;font-size:13.2px;line-height:20px;color:#222;left:523.5px;width:155px;overflow:hidden;text-overflow:ellipsis;"><span style="color:#bdbdbd">Liés à un contact utilisateur</span></div>
<svg class="b" style="left:684.3px;top:144.2px;" width="6" height="4" viewBox="0 0 6 4" fill="#707070"><path d="M0 0h6L3 4z"/></svg>
<svg class="b" style="left:718px;top:138px;" width="13.0" height="13" viewBox="0 0 512 512" fill="#eff7f7"><path d="M0 252.118V48C0 21.490 21.490 0 48 0h204.118a48 48 0 0 1 33.941 14.059l211.882 211.882c18.745 18.745 18.745 49.137 0 67.882L293.823 497.941c-18.745 18.745-49.137 18.745-67.882 0L14.059 286.059A48 48 0 0 1 0 252.118zM112 64c-26.510 0-48 21.490-48 48s21.490 48 48 48 48-21.490 48-48-21.490-48-48-48z"/></svg>
<div class="b" style="left:736px;top:133px;width:241px;height:26px;background:#fff;border-radius:3px;"></div>
<div class="t " style="top:136px;font-size:13.2px;line-height:20px;color:#222;left:741.5px;width:215px;overflow:hidden;text-overflow:ellipsis;"><span style="color:#bdbdbd">Comprenant produit / service avec catégorie</span></div>
<svg class="b" style="left:963.3px;top:144.2px;" width="6" height="4" viewBox="0 0 6 4" fill="#707070"><path d="M0 0h6L3 4z"/></svg>
<svg class="b" style="left:997px;top:138px;" width="13.0" height="13" viewBox="0 0 512 512" fill="#eff7f7"><path d="M0 252.118V48C0 21.490 21.490 0 48 0h204.118a48 48 0 0 1 33.941 14.059l211.882 211.882c18.745 18.745 18.745 49.137 0 67.882L293.823 497.941c-18.745 18.745-49.137 18.745-67.882 0L14.059 286.059A48 48 0 0 1 0 252.118zM112 64c-26.510 0-48 21.490-48 48s21.490 48 48 48 48-21.490 48-48-21.490-48-48-48z"/></svg>
<div class="b" style="left:1015px;top:133px;width:174px;height:26px;background:#fff;border-radius:3px;"></div>
<div class="t " style="top:136px;font-size:13.2px;line-height:20px;color:#222;left:1020.5px;width:154.5px;overflow:hidden;text-overflow:ellipsis;"><span style="color:#bdbdbd">SuppliersCategoriesShort</span></div>
<svg class="b" style="left:1175.3px;top:144.2px;" width="6" height="4" viewBox="0 0 6 4" fill="#707070"><path d="M0 0h6L3 4z"/></svg>
<svg class="b" style="left:291px;top:174.8px;" width="12.1" height="12.1" viewBox="0 0 512 512" fill="#0a0a0a"><path d="M505 442.7L405.3 343c-4.5-4.5-10.6-7-17-7H372c27.6-35.3 44-79.7 44-128C416 93.1 322.9 0 208 0S0 93.1 0 208s93.1 208 208 208c48.3 0 92.7-16.4 128-44v16.3c0 6.4 2.5 12.5 7 17l99.7 99.7c9.4 9.4 24.6 9.4 33.9 0l28.3-28.3c9.4-9.4 9.4-24.6.1-34zM208 336c-70.7 0-128-57.2-128-128 0-70.7 57.2-128 128-128 70.7 0 128 57.2 128 128 0 70.7-57.2 128-128 128z"/></svg>
<svg class="b" style="left:313.5px;top:174.5px;" width="8.39" height="12.2" viewBox="0 0 352 512" fill="#0a0a0a"><path d="M242.72 256l100.07-100.07c12.28-12.28 12.28-32.19 0-44.48l-22.24-22.24c-12.28-12.28-32.19-12.28-44.48 0L176 189.28 75.93 89.21c-12.28-12.28-32.19-12.28-44.48 0L9.21 111.45c-12.28 12.28-12.28 32.19 0 44.48L109.28 256 9.21 356.07c-12.28 12.28-12.28 32.19 0 44.48l22.24 22.24c12.28 12.28 32.2 12.28 44.48 0L176 322.72l100.07 100.07c12.28 12.28 32.2 12.28 44.48 0l22.24-22.24c12.28-12.28 12.28-32.19 0-44.48L242.72 256z"/></svg>
<div class="b" style="left:351px;top:168px;width:45px;height:26px;background:#fff;border-radius:3px;"></div>
<div class="b" style="left:503px;top:168px;width:67px;height:26px;background:#fff;border-radius:3px;"></div>
<div class="b" style="left:671px;top:168px;width:90px;height:26px;background:#fff;border-radius:3px;"></div>
<svg class="b" style="left:747.3px;top:179.2px;" width="6" height="4" viewBox="0 0 6 4" fill="#707070"><path d="M0 0h6L3 4z"/></svg>
<div class="b" style="left:812px;top:168px;width:83px;height:26px;background:#fff;border-radius:3px;"></div>
<div class="t " style="top:171px;font-size:13.2px;line-height:20px;color:#bdbdbd;left:653.5px;width:400px;text-align:center;">Du</div>
<svg class="b" style="left:896.5px;top:176.9px;" width="10" height="8" viewBox="0 0 10 8" fill="none"><rect x="0.500" y="0.500" width="9" height="7" fill="#ece8f7" stroke="#a595d6"/><rect x="2" y="2.500" width="2.500" height="1.500" fill="#8a74c8"/><rect x="5.500" y="2.500" width="2.500" height="1.500" fill="#c3b8e6"/><rect x="2" y="4.800" width="2.500" height="1.400" fill="#c3b8e6"/><rect x="5.500" y="4.800" width="2.500" height="1.400" fill="#c3b8e6"/></svg>
<div class="b" style="left:909px;top:168px;width:83px;height:26px;background:#fff;border-radius:3px;"></div>
<div class="t " style="top:171px;font-size:13.2px;line-height:20px;color:#bdbdbd;left:750.5px;width:400px;text-align:center;">au</div>
<svg class="b" style="left:994.5px;top:176.9px;" width="10" height="8" viewBox="0 0 10 8" fill="none"><rect x="0.500" y="0.500" width="9" height="7" fill="#ece8f7" stroke="#a595d6"/><rect x="2" y="2.500" width="2.500" height="1.500" fill="#8a74c8"/><rect x="5.500" y="2.500" width="2.500" height="1.500" fill="#c3b8e6"/><rect x="2" y="4.800" width="2.500" height="1.400" fill="#c3b8e6"/><rect x="5.500" y="4.800" width="2.500" height="1.400" fill="#c3b8e6"/></svg>
<div class="b" style="left:1044px;top:168px;width:83px;height:26px;background:#fff;border-radius:3px;"></div>
<div class="t " style="top:171px;font-size:13.2px;line-height:20px;color:#bdbdbd;left:885.5px;width:400px;text-align:center;">Avant</div>
<svg class="b" style="left:1128.5px;top:176.9px;" width="10" height="8" viewBox="0 0 10 8" fill="none"><rect x="0.500" y="0.500" width="9" height="7" fill="#ece8f7" stroke="#a595d6"/><rect x="2" y="2.500" width="2.500" height="1.500" fill="#8a74c8"/><rect x="5.500" y="2.500" width="2.500" height="1.500" fill="#c3b8e6"/><rect x="2" y="4.800" width="2.500" height="1.400" fill="#c3b8e6"/><rect x="5.500" y="4.800" width="2.500" height="1.400" fill="#c3b8e6"/></svg>
<div class="b" style="left:1145px;top:174.6px;width:14px;height:14px;background:#fff;border:1px solid #6b6b6b;border-radius:2.500px;"></div>
<div class="t " style="top:171px;font-size:13.2px;line-height:20px;color:#0a0a0a;left:1162px;">Alerte</div>
<div class="b" style="left:1224px;top:168px;width:45px;height:26px;background:#fff;border-radius:3px;"></div>
<div class="b" style="left:1368px;top:168px;width:90px;height:26px;background:#fff;border-radius:3px;"></div>
<svg class="b" style="left:1444.3px;top:179.2px;" width="6" height="4" viewBox="0 0 6 4" fill="#707070"><path d="M0 0h6L3 4z"/></svg>
<div class="b" style="left:1517px;top:168px;width:48px;height:26px;background:#fff;border-radius:3px;"></div>
<div class="b" style="left:1585px;top:168px;width:152px;height:26px;background:#fff;border-radius:3px;"></div>
<div class="b" style="left:1777px;top:168px;width:90px;height:26px;background:#fff;border-radius:3px;"></div>
<svg class="b" style="left:1853.3px;top:179.2px;" width="6" height="4" viewBox="0 0 6 4" fill="#707070"><path d="M0 0h6L3 4z"/></svg>
<svg class="b" style="left:287.8px;top:210.4px;" width="12.91" height="11.3" viewBox="0 0 160 140" fill="#ebf6f6"><rect x="0" y="10" width="30" height="28" rx="6"/><rect x="48" y="13" width="112" height="22" rx="6"/><rect x="0" y="56" width="30" height="28" rx="6"/><rect x="48" y="59" width="112" height="22" rx="6"/><rect x="0" y="102" width="30" height="28" rx="6"/><rect x="48" y="105" width="112" height="22" rx="6"/></svg>
<div class="b" style="left:311.2px;top:209.2px;width:13.6px;height:13.4px;background:#fff;border:1px solid #767676;border-radius:2.500px;"></div>
<div class="t " style="top:205px;font-size:13.2px;line-height:20px;color:#ebf6f6;left:351px;">Réf.</div>
<div class="t " style="top:205px;font-size:13.2px;line-height:20px;color:#ebf6f6;left:503px;">Réf. fournisseur</div>
<div class="t " style="top:205px;font-size:13.2px;line-height:20px;color:#ebf6f6;left:671px;">Type</div>
<svg class="b" style="left:857px;top:212.4px;" width="7" height="4.2" viewBox="0 0 8 5" fill="#ebf6f6"><path d="M0 5L4 0l4 5z"/></svg>
<div class="t " style="top:205px;font-size:13.2px;line-height:20px;color:#ebf6f6;left:868px;">Date facturation</div>
<div class="t " style="top:205px;font-size:13.2px;line-height:20px;color:#ebf6f6;left:1075px;">Date échéance</div>
<div class="t " style="top:205px;font-size:13.2px;line-height:20px;color:#ebf6f6;left:1224px;">Tiers</div>
<div class="t " style="top:205px;font-size:13.2px;line-height:20px;color:#ebf6f6;left:1368px;width:100px;overflow:hidden;text-overflow:ellipsis;">Mode de règlement</div>
<div class="t " style="top:205px;font-size:13.2px;line-height:20px;color:#ebf6f6;right:344px;text-align:right;">Montant HT</div>
<div class="t " style="top:205px;font-size:13.2px;line-height:20px;color:#ebf6f6;right:157px;text-align:right;">Tiers de livraison</div>
<div class="t " style="top:205px;font-size:13.2px;line-height:20px;color:#ebf6f6;left:1622px;width:400px;text-align:center;">État</div>
<div class="b" style="left:271px;top:132px;width:1px;height:587px;background:#d9d9d9;"></div>
<div class="b" style="left:1881px;top:132px;width:1px;height:587px;background:#d9d9d9;"></div>
<div class="b" style="left:272px;top:235px;width:1609px;height:46px;background:#fcfcfc;border-bottom:1px solid #e9e9e9;"></div>
<div class="b" style="left:298px;top:249px;width:14px;height:14px;background:#fff;border:1px solid #6f6f6f;border-radius:2.500px;"></div>
<svg class="b" style="left:350.6px;top:250.3px;" width="10.28" height="13.7" viewBox="0 0 120 160" fill="#4f9fb6"><path d="M8 0h64v36a8 8 0 0 0 8 8h40v108a8 8 0 0 1-8 8H8a8 8 0 0 1-8-8V8a8 8 0 0 1 8-8zM82 0l38 36H86a4 4 0 0 1-4-4z"/><rect x="22" y="22" width="28" height="9" fill="#fff"/><rect x="22" y="42" width="28" height="9" fill="#fff"/><text x="62" y="134" font-family="Liberation Sans" font-weight="700" font-size="74" text-anchor="middle" fill="#fff">$</text><rect x="58.500" y="66" width="7" height="80" fill="#fff"/></svg>
<div class="t " style="top:248px;font-size:13.2px;line-height:20px;color:#0d2b3b;left:364.3px;">FSF20260004</div>
<svg class="b" style="left:449.95468750000003px;top:250.4px;" width="13.5" height="13.5" viewBox="0 0 512 512" fill="#9a9a9a"><path d="M216 0h80c13.300 0 24 10.700 24 24v168h87.700c17.800 0 26.700 21.500 14.100 34.100L269.700 378.300c-7.500 7.500-19.800 7.500-27.300 0L90.100 226.100c-12.600-12.600-3.700-34.100 14.100-34.100H192V24c0-13.300 10.700-24 24-24zm296 376v112c0 13.300-10.700 24-24 24H24c-13.300 0-24-10.700-24-24V376c0-13.300 10.700-24 24-24h146.700l49 49c20.100 20.100 52.500 20.100 72.600 0l49-49H488c13.300 0 24 10.700 24 24zm-124 88c0-11-9-20-20-20s-20 9-20 20 9 20 20 20 20-9 20-20zm64 0c0-11-9-20-20-20s-20 9-20 20 9 20 20 20 20-9 20-20z"/></svg>
<div class="t " style="top:248px;font-size:13.2px;line-height:20px;color:#222;left:503px;width:143px;overflow:hidden;text-overflow:ellipsis;">F17797979</div>
<div class="t " style="top:248px;font-size:13.2px;line-height:20px;color:#222;left:671px;">Facture standard</div>
<div class="t " style="top:248px;font-size:13.2px;line-height:20px;color:#222;left:709px;width:400px;text-align:center;">05/03/2026</div>
<div class="t " style="top:248px;font-size:13.2px;line-height:20px;color:#222;left:920px;width:400px;text-align:center;">05/03/2027</div>
<svg class="b" style="left:1224.2px;top:250.3px;" width="11.83" height="13.8" viewBox="0 0 120 140" fill="#6e65b1"><path d="M14 0h92a5 5 0 0 1 5 5v124h6a3 3 0 0 1 3 3v8H0v-8a3 3 0 0 1 3-3h6V5a5 5 0 0 1 5-5z"/><rect x="31" y="17" width="22" height="16" rx="2" fill="#fff"/><rect x="65" y="17" width="22" height="16" rx="2" fill="#fff"/><rect x="31" y="43" width="22" height="16" rx="2" fill="#fff"/><rect x="65" y="43" width="22" height="16" rx="2" fill="#fff"/><rect x="31" y="69" width="22" height="16" rx="2" fill="#fff"/><rect x="65" y="69" width="22" height="16" rx="2" fill="#fff"/><rect x="51" y="106" width="18" height="30" fill="#fff"/></svg>
<div class="t " style="top:248px;font-size:13.2px;line-height:20px;color:#0d2b3b;left:1239px;width:108px;overflow:hidden;text-overflow:ellipsis;">DIHR (DIHR)</div>
<div class="t " style="top:248px;font-size:13.2px;line-height:20px;color:#222;left:1368px;width:100px;overflow:hidden;text-overflow:ellipsis;">Virement bancaire</div>
<div class="t " style="top:248px;font-size:13.2px;line-height:20px;color:#0f6a70;right:344px;text-align:right;">1 328,70</div>
<div class="b" style="left:1791px;top:249px;width:61px;height:18.8px;background:#bd962c;border-radius:4px;"></div>
<div class="t " style="top:248px;font-size:12.5px;line-height:20px;color:#fff;font-weight:700;left:1621.4px;width:400px;text-align:center;">Impayée</div>
<div class="b" style="left:272px;top:281px;width:1609px;height:44px;background:#ffffff;border-bottom:1px solid #e9e9e9;"></div>
<div class="b" style="left:298px;top:293px;width:14px;height:14px;background:#fff;border:1px solid #6f6f6f;border-radius:2.500px;"></div>
<svg class="b" style="left:350.6px;top:294.3px;" width="10.28" height="13.7" viewBox="0 0 120 160" fill="#4f9fb6"><path d="M8 0h64v36a8 8 0 0 0 8 8h40v108a8 8 0 0 1-8 8H8a8 8 0 0 1-8-8V8a8 8 0 0 1 8-8zM82 0l38 36H86a4 4 0 0 1-4-4z"/><rect x="22" y="22" width="28" height="9" fill="#fff"/><rect x="22" y="42" width="28" height="9" fill="#fff"/><text x="62" y="134" font-family="Liberation Sans" font-weight="700" font-size="74" text-anchor="middle" fill="#fff">$</text><rect x="58.500" y="66" width="7" height="80" fill="#fff"/></svg>
<div class="t " style="top:292px;font-size:13.2px;line-height:20px;color:#0d2b3b;left:364.3px;">FSF20260003</div>
<svg class="b" style="left:449.95468750000003px;top:294.4px;" width="13.5" height="13.5" viewBox="0 0 512 512" fill="#9a9a9a"><path d="M216 0h80c13.300 0 24 10.700 24 24v168h87.700c17.800 0 26.700 21.500 14.100 34.100L269.700 378.300c-7.500 7.500-19.800 7.500-27.300 0L90.100 226.100c-12.600-12.600-3.700-34.100 14.100-34.100H192V24c0-13.300 10.700-24 24-24zm296 376v112c0 13.300-10.700 24-24 24H24c-13.300 0-24-10.700-24-24V376c0-13.300 10.700-24 24-24h146.700l49 49c20.100 20.100 52.500 20.100 72.600 0l49-49H488c13.300 0 24 10.700 24 24zm-124 88c0-11-9-20-20-20s-20 9-20 20 9 20 20 20 20-9 20-20zm64 0c0-11-9-20-20-20s-20 9-20 20 9 20 20 20 20-9 20-20z"/></svg>
<div class="t " style="top:292px;font-size:13.2px;line-height:20px;color:#222;left:503px;width:143px;overflow:hidden;text-overflow:ellipsis;"></div>
<div class="t " style="top:292px;font-size:13.2px;line-height:20px;color:#222;left:671px;">Facture standard</div>
<div class="t " style="top:292px;font-size:13.2px;line-height:20px;color:#222;left:709px;width:400px;text-align:center;">02/03/2026</div>
<div class="t " style="top:292px;font-size:13.2px;line-height:20px;color:#222;left:920px;width:400px;text-align:center;">01/04/2026</div>
<svg class="b" style="left:1224.2px;top:294.3px;" width="11.83" height="13.8" viewBox="0 0 120 140" fill="#6e65b1"><path d="M14 0h92a5 5 0 0 1 5 5v124h6a3 3 0 0 1 3 3v8H0v-8a3 3 0 0 1 3-3h6V5a5 5 0 0 1 5-5z"/><rect x="31" y="17" width="22" height="16" rx="2" fill="#fff"/><rect x="65" y="17" width="22" height="16" rx="2" fill="#fff"/><rect x="31" y="43" width="22" height="16" rx="2" fill="#fff"/><rect x="65" y="43" width="22" height="16" rx="2" fill="#fff"/><rect x="31" y="69" width="22" height="16" rx="2" fill="#fff"/><rect x="65" y="69" width="22" height="16" rx="2" fill="#fff"/><rect x="51" y="106" width="18" height="30" fill="#fff"/></svg>
<div class="t " style="top:292px;font-size:13.2px;line-height:20px;color:#0d2b3b;left:1239px;width:108px;overflow:hidden;text-overflow:ellipsis;">ALVENE (ALVENE)</div>
<div class="t " style="top:292px;font-size:13.2px;line-height:20px;color:#222;left:1368px;width:100px;overflow:hidden;text-overflow:ellipsis;">Virement bancaire</div>
<div class="t " style="top:292px;font-size:13.2px;line-height:20px;color:#0f6a70;right:344px;text-align:right;">556,00</div>
<div class="b" style="left:1791px;top:293px;width:61px;height:18.8px;background:#bd962c;border-radius:4px;"></div>
<div class="t " style="top:292px;font-size:12.5px;line-height:20px;color:#fff;font-weight:700;left:1621.4px;width:400px;text-align:center;">Impayée</div>
<div class="b" style="left:272px;top:325px;width:1609px;height:44px;background:#fcfcfc;border-bottom:1px solid #e9e9e9;"></div>
<div class="b" style="left:298px;top:337px;width:14px;height:14px;background:#fff;border:1px solid #6f6f6f;border-radius:2.500px;"></div>
<svg class="b" style="left:350.6px;top:338.3px;" width="10.28" height="13.7" viewBox="0 0 120 160" fill="#4f9fb6"><path d="M8 0h64v36a8 8 0 0 0 8 8h40v108a8 8 0 0 1-8 8H8a8 8 0 0 1-8-8V8a8 8 0 0 1 8-8zM82 0l38 36H86a4 4 0 0 1-4-4z"/><rect x="22" y="22" width="28" height="9" fill="#fff"/><rect x="22" y="42" width="28" height="9" fill="#fff"/><text x="62" y="134" font-family="Liberation Sans" font-weight="700" font-size="74" text-anchor="middle" fill="#fff">$</text><rect x="58.500" y="66" width="7" height="80" fill="#fff"/></svg>
<div class="t " style="top:336px;font-size:13.2px;line-height:20px;color:#0d2b3b;left:364.3px;">(PROV100)</div>
<svg class="b" style="left:434.521875px;top:338.4px;" width="13.5" height="13.5" viewBox="0 0 512 512" fill="#9a9a9a"><path d="M216 0h80c13.300 0 24 10.700 24 24v168h87.700c17.800 0 26.700 21.500 14.100 34.100L269.700 378.300c-7.500 7.500-19.800 7.500-27.300 0L90.100 226.100c-12.600-12.600-3.700-34.100 14.100-34.100H192V24c0-13.300 10.700-24 24-24zm296 376v112c0 13.300-10.700 24-24 24H24c-13.300 0-24-10.700-24-24V376c0-13.300 10.700-24 24-24h146.700l49 49c20.100 20.100 52.500 20.100 72.600 0l49-49H488c13.300 0 24 10.700 24 24zm-124 88c0-11-9-20-20-20s-20 9-20 20 9 20 20 20 20-9 20-20zm64 0c0-11-9-20-20-20s-20 9-20 20 9 20 20 20 20-9 20-20z"/></svg>
<div class="t " style="top:336px;font-size:13.2px;line-height:20px;color:#222;left:503px;width:143px;overflow:hidden;text-overflow:ellipsis;">test</div>
<div class="t " style="top:336px;font-size:13.2px;line-height:20px;color:#222;left:671px;">Facture standard</div>
<div class="t " style="top:336px;font-size:13.2px;line-height:20px;color:#222;left:709px;width:400px;text-align:center;">20/02/2026</div>
<div class="t " style="top:336px;font-size:13.2px;line-height:20px;color:#222;left:920px;width:400px;text-align:center;">20/02/2027</div>
<svg class="b" style="left:1224.2px;top:338.3px;" width="11.83" height="13.8" viewBox="0 0 120 140" fill="#6e65b1"><path d="M14 0h92a5 5 0 0 1 5 5v124h6a3 3 0 0 1 3 3v8H0v-8a3 3 0 0 1 3-3h6V5a5 5 0 0 1 5-5z"/><rect x="31" y="17" width="22" height="16" rx="2" fill="#fff"/><rect x="65" y="17" width="22" height="16" rx="2" fill="#fff"/><rect x="31" y="43" width="22" height="16" rx="2" fill="#fff"/><rect x="65" y="43" width="22" height="16" rx="2" fill="#fff"/><rect x="31" y="69" width="22" height="16" rx="2" fill="#fff"/><rect x="65" y="69" width="22" height="16" rx="2" fill="#fff"/><rect x="51" y="106" width="18" height="30" fill="#fff"/></svg>
<div class="t " style="top:336px;font-size:13.2px;line-height:20px;color:#0d2b3b;left:1239px;width:108px;overflow:hidden;text-overflow:ellipsis;">VOLD</div>
<div class="t " style="top:336px;font-size:13.2px;line-height:20px;color:#222;left:1368px;width:100px;overflow:hidden;text-overflow:ellipsis;">Virement bancaire</div>
<div class="t " style="top:336px;font-size:13.2px;line-height:20px;color:#0f6a70;right:344px;text-align:right;">0,00</div>
<div class="b" style="left:1789.3px;top:337px;width:65.5px;height:18.7px;background:#fff;border:1px solid #c4caca;border-radius:4px;"></div>
<div class="t " style="top:336px;font-size:12.5px;line-height:20px;color:#9a9a9a;font-weight:700;left:1621.9px;width:400px;text-align:center;">Brouillon</div>
<div class="b" style="left:272px;top:369px;width:1609px;height:44px;background:#ffffff;border-bottom:1px solid #e9e9e9;"></div>
<div class="b" style="left:298px;top:381px;width:14px;height:14px;background:#fff;border:1px solid #6f6f6f;border-radius:2.500px;"></div>
<svg class="b" style="left:350.6px;top:382.3px;" width="10.28" height="13.7" viewBox="0 0 120 160" fill="#4f9fb6"><path d="M8 0h64v36a8 8 0 0 0 8 8h40v108a8 8 0 0 1-8 8H8a8 8 0 0 1-8-8V8a8 8 0 0 1 8-8zM82 0l38 36H86a4 4 0 0 1-4-4z"/><rect x="22" y="22" width="28" height="9" fill="#fff"/><rect x="22" y="42" width="28" height="9" fill="#fff"/><text x="62" y="134" font-family="Liberation Sans" font-weight="700" font-size="74" text-anchor="middle" fill="#fff">$</text><rect x="58.500" y="66" width="7" height="80" fill="#fff"/></svg>
<div class="t " style="top:380px;font-size:13.2px;line-height:20px;color:#0d2b3b;left:364.3px;">FSF20260002</div>
<svg class="b" style="left:449.95468750000003px;top:382.4px;" width="13.5" height="13.5" viewBox="0 0 512 512" fill="#9a9a9a"><path d="M216 0h80c13.300 0 24 10.700 24 24v168h87.700c17.800 0 26.700 21.500 14.100 34.100L269.700 378.300c-7.500 7.500-19.800 7.500-27.300 0L90.100 226.100c-12.600-12.600-3.700-34.100 14.100-34.100H192V24c0-13.300 10.700-24 24-24zm296 376v112c0 13.300-10.700 24-24 24H24c-13.300 0-24-10.700-24-24V376c0-13.300 10.700-24 24-24h146.700l49 49c20.100 20.100 52.500 20.100 72.600 0l49-49H488c13.300 0 24 10.700 24 24zm-124 88c0-11-9-20-20-20s-20 9-20 20 9 20 20 20 20-9 20-20zm64 0c0-11-9-20-20-20s-20 9-20 20 9 20 20 20 20-9 20-20z"/></svg>
<div class="t " style="top:380px;font-size:13.2px;line-height:20px;color:#222;left:503px;width:143px;overflow:hidden;text-overflow:ellipsis;">F7797979</div>
<div class="t " style="top:380px;font-size:13.2px;line-height:20px;color:#222;left:671px;">Facture standard</div>
<div class="t " style="top:380px;font-size:13.2px;line-height:20px;color:#222;left:709px;width:400px;text-align:center;">12/02/2026</div>
<div class="t " style="top:380px;font-size:13.2px;line-height:20px;color:#222;left:920px;width:400px;text-align:center;">12/02/2027</div>
<svg class="b" style="left:1224.2px;top:382.3px;" width="11.83" height="13.8" viewBox="0 0 120 140" fill="#6e65b1"><path d="M14 0h92a5 5 0 0 1 5 5v124h6a3 3 0 0 1 3 3v8H0v-8a3 3 0 0 1 3-3h6V5a5 5 0 0 1 5-5z"/><rect x="31" y="17" width="22" height="16" rx="2" fill="#fff"/><rect x="65" y="17" width="22" height="16" rx="2" fill="#fff"/><rect x="31" y="43" width="22" height="16" rx="2" fill="#fff"/><rect x="65" y="43" width="22" height="16" rx="2" fill="#fff"/><rect x="31" y="69" width="22" height="16" rx="2" fill="#fff"/><rect x="65" y="69" width="22" height="16" rx="2" fill="#fff"/><rect x="51" y="106" width="18" height="30" fill="#fff"/></svg>
<div class="t " style="top:380px;font-size:13.2px;line-height:20px;color:#0d2b3b;left:1239px;width:108px;overflow:hidden;text-overflow:ellipsis;">DIHR (DIHR)</div>
<div class="t " style="top:380px;font-size:13.2px;line-height:20px;color:#222;left:1368px;width:100px;overflow:hidden;text-overflow:ellipsis;">Ordre de prélèvement</div>
<div class="t " style="top:380px;font-size:13.2px;line-height:20px;color:#0f6a70;right:344px;text-align:right;">1 328,70</div>
<div class="b" style="left:1791px;top:381px;width:61px;height:18.8px;background:#bd962c;border-radius:4px;"></div>
<div class="t " style="top:380px;font-size:12.5px;line-height:20px;color:#fff;font-weight:700;left:1621.4px;width:400px;text-align:center;">Impayée</div>
<div class="b" style="left:272px;top:413px;width:1609px;height:44px;background:#fcfcfc;border-bottom:1px solid #e9e9e9;"></div>
<div class="b" style="left:298px;top:425px;width:14px;height:14px;background:#fff;border:1px solid #6f6f6f;border-radius:2.500px;"></div>
<svg class="b" style="left:350.6px;top:426.3px;" width="10.28" height="13.7" viewBox="0 0 120 160" fill="#4f9fb6"><path d="M8 0h64v36a8 8 0 0 0 8 8h40v108a8 8 0 0 1-8 8H8a8 8 0 0 1-8-8V8a8 8 0 0 1 8-8zM82 0l38 36H86a4 4 0 0 1-4-4z"/><rect x="22" y="22" width="28" height="9" fill="#fff"/><rect x="22" y="42" width="28" height="9" fill="#fff"/><text x="62" y="134" font-family="Liberation Sans" font-weight="700" font-size="74" text-anchor="middle" fill="#fff">$</text><rect x="58.500" y="66" width="7" height="80" fill="#fff"/></svg>
<div class="t " style="top:424px;font-size:13.2px;line-height:20px;color:#0d2b3b;left:364.3px;">FSF20260001</div>
<svg class="b" style="left:449.95468750000003px;top:426.4px;" width="13.5" height="13.5" viewBox="0 0 512 512" fill="#9a9a9a"><path d="M216 0h80c13.300 0 24 10.700 24 24v168h87.700c17.800 0 26.700 21.500 14.100 34.100L269.700 378.300c-7.500 7.500-19.800 7.500-27.300 0L90.100 226.100c-12.600-12.600-3.700-34.100 14.100-34.100H192V24c0-13.300 10.700-24 24-24zm296 376v112c0 13.300-10.700 24-24 24H24c-13.300 0-24-10.700-24-24V376c0-13.300 10.700-24 24-24h146.700l49 49c20.100 20.100 52.500 20.100 72.600 0l49-49H488c13.300 0 24 10.700 24 24zm-124 88c0-11-9-20-20-20s-20 9-20 20 9 20 20 20 20-9 20-20zm64 0c0-11-9-20-20-20s-20 9-20 20 9 20 20 20 20-9 20-20z"/></svg>
<div class="t " style="top:424px;font-size:13.2px;line-height:20px;color:#222;left:503px;width:143px;overflow:hidden;text-overflow:ellipsis;">ddffdgf</div>
<div class="t " style="top:424px;font-size:13.2px;line-height:20px;color:#222;left:671px;">Facture standard</div>
<div class="t " style="top:424px;font-size:13.2px;line-height:20px;color:#222;left:709px;width:400px;text-align:center;">30/01/2026</div>
<div class="t " style="top:424px;font-size:13.2px;line-height:20px;color:#222;left:920px;width:400px;text-align:center;">30/01/2027</div>
<svg class="b" style="left:1224.2px;top:426.3px;" width="11.83" height="13.8" viewBox="0 0 120 140" fill="#6e65b1"><path d="M14 0h92a5 5 0 0 1 5 5v124h6a3 3 0 0 1 3 3v8H0v-8a3 3 0 0 1 3-3h6V5a5 5 0 0 1 5-5z"/><rect x="31" y="17" width="22" height="16" rx="2" fill="#fff"/><rect x="65" y="17" width="22" height="16" rx="2" fill="#fff"/><rect x="31" y="43" width="22" height="16" rx="2" fill="#fff"/><rect x="65" y="43" width="22" height="16" rx="2" fill="#fff"/><rect x="31" y="69" width="22" height="16" rx="2" fill="#fff"/><rect x="65" y="69" width="22" height="16" rx="2" fill="#fff"/><rect x="51" y="106" width="18" height="30" fill="#fff"/></svg>
<div class="t " style="top:424px;font-size:13.2px;line-height:20px;color:#0d2b3b;left:1239px;width:108px;overflow:hidden;text-overflow:ellipsis;">DIHR (DIHR)</div>
<div class="t " style="top:424px;font-size:13.2px;line-height:20px;color:#222;left:1368px;width:100px;overflow:hidden;text-overflow:ellipsis;">Virement bancaire</div>
<div class="t " style="top:424px;font-size:13.2px;line-height:20px;color:#0f6a70;right:344px;text-align:right;">1 337,30</div>
<div class="b" style="left:1797.8px;top:425px;width:47.4px;height:18.7px;background:#c9d1cf;border-radius:4px;"></div>
<div class="t " style="top:424px;font-size:12.5px;line-height:20px;color:#7d8583;font-weight:700;left:1621.4px;width:400px;text-align:center;">Payée</div>
<div class="b" style="left:272px;top:457px;width:1609px;height:44px;background:#ffffff;border-bottom:1px solid #e9e9e9;"></div>
<div class="b" style="left:298px;top:470px;width:14px;height:14px;background:#fff;border:1px solid #6f6f6f;border-radius:2.500px;"></div>
<svg class="b" style="left:350.6px;top:471.3px;" width="10.28" height="13.7" viewBox="0 0 120 160" fill="#4f9fb6"><path d="M8 0h64v36a8 8 0 0 0 8 8h40v108a8 8 0 0 1-8 8H8a8 8 0 0 1-8-8V8a8 8 0 0 1 8-8zM82 0l38 36H86a4 4 0 0 1-4-4z"/><rect x="22" y="22" width="28" height="9" fill="#fff"/><rect x="22" y="42" width="28" height="9" fill="#fff"/><text x="62" y="134" font-family="Liberation Sans" font-weight="700" font-size="74" text-anchor="middle" fill="#fff">$</text><rect x="58.500" y="66" width="7" height="80" fill="#fff"/></svg>
<div class="t " style="top:469px;font-size:13.2px;line-height:20px;color:#0d2b3b;left:364.3px;">(PROV97)</div>
<svg class="b" style="left:427.18125000000003px;top:471.4px;" width="13.5" height="13.5" viewBox="0 0 512 512" fill="#9a9a9a"><path d="M216 0h80c13.300 0 24 10.700 24 24v168h87.700c17.800 0 26.700 21.500 14.100 34.100L269.700 378.300c-7.500 7.500-19.800 7.500-27.300 0L90.100 226.100c-12.600-12.600-3.700-34.100 14.100-34.100H192V24c0-13.300 10.700-24 24-24zm296 376v112c0 13.300-10.700 24-24 24H24c-13.300 0-24-10.700-24-24V376c0-13.300 10.700-24 24-24h146.700l49 49c20.100 20.100 52.500 20.100 72.600 0l49-49H488c13.300 0 24 10.700 24 24zm-124 88c0-11-9-20-20-20s-20 9-20 20 9 20 20 20 20-9 20-20zm64 0c0-11-9-20-20-20s-20 9-20 20 9 20 20 20 20-9 20-20z"/></svg>
<div class="t " style="top:469px;font-size:13.2px;line-height:20px;color:#222;left:503px;width:143px;overflow:hidden;text-overflow:ellipsis;">20260106101951</div>
<div class="t " style="top:469px;font-size:13.2px;line-height:20px;color:#222;left:671px;">Facture standard</div>
<div class="t " style="top:469px;font-size:13.2px;line-height:20px;color:#222;left:709px;width:400px;text-align:center;">06/01/2026</div>
<div class="t " style="top:469px;font-size:13.2px;line-height:20px;color:#222;left:920px;width:400px;text-align:center;">06/01/2027</div>
<svg class="b" style="left:1224.2px;top:471.3px;" width="11.83" height="13.8" viewBox="0 0 120 140" fill="#6e65b1"><path d="M14 0h92a5 5 0 0 1 5 5v124h6a3 3 0 0 1 3 3v8H0v-8a3 3 0 0 1 3-3h6V5a5 5 0 0 1 5-5z"/><rect x="31" y="17" width="22" height="16" rx="2" fill="#fff"/><rect x="65" y="17" width="22" height="16" rx="2" fill="#fff"/><rect x="31" y="43" width="22" height="16" rx="2" fill="#fff"/><rect x="65" y="43" width="22" height="16" rx="2" fill="#fff"/><rect x="31" y="69" width="22" height="16" rx="2" fill="#fff"/><rect x="65" y="69" width="22" height="16" rx="2" fill="#fff"/><rect x="51" y="106" width="18" height="30" fill="#fff"/></svg>
<div class="t " style="top:469px;font-size:13.2px;line-height:20px;color:#0d2b3b;left:1239px;width:108px;overflow:hidden;text-overflow:ellipsis;">BARTSCHER (BARTSCHER)</div>
<div class="t " style="top:469px;font-size:13.2px;line-height:20px;color:#222;left:1368px;width:100px;overflow:hidden;text-overflow:ellipsis;"></div>
<div class="t " style="top:469px;font-size:13.2px;line-height:20px;color:#0f6a70;right:344px;text-align:right;">22,23</div>
<div class="b" style="left:1789.3px;top:470px;width:65.5px;height:18.7px;background:#fff;border:1px solid #c4caca;border-radius:4px;"></div>
<div class="t " style="top:469px;font-size:12.5px;line-height:20px;color:#9a9a9a;font-weight:700;left:1621.9px;width:400px;text-align:center;">Brouillon</div>
<div class="b" style="left:272px;top:501px;width:1609px;height:45px;background:#fcfcfc;border-bottom:1px solid #e9e9e9;"></div>
<div class="b" style="left:298px;top:514px;width:14px;height:14px;background:#fff;border:1px solid #6f6f6f;border-radius:2.500px;"></div>
<svg class="b" style="left:350.6px;top:515.3px;" width="10.28" height="13.7" viewBox="0 0 120 160" fill="#4f9fb6"><path d="M8 0h64v36a8 8 0 0 0 8 8h40v108a8 8 0 0 1-8 8H8a8 8 0 0 1-8-8V8a8 8 0 0 1 8-8zM82 0l38 36H86a4 4 0 0 1-4-4z"/><path d="M35 84L83 134M83 84L35 134" stroke="#fff" stroke-width="17" fill="none"/></svg>
<div class="t " style="top:513px;font-size:13.2px;line-height:20px;color:#0d2b3b;left:364.3px;">(PROV96)</div>
<svg class="b" style="left:427.18125000000003px;top:515.4px;" width="13.5" height="13.5" viewBox="0 0 512 512" fill="#9a9a9a"><path d="M216 0h80c13.300 0 24 10.700 24 24v168h87.700c17.800 0 26.700 21.500 14.100 34.100L269.700 378.300c-7.500 7.500-19.800 7.500-27.300 0L90.100 226.100c-12.600-12.600-3.700-34.100 14.100-34.100H192V24c0-13.300 10.700-24 24-24zm296 376v112c0 13.300-10.700 24-24 24H24c-13.300 0-24-10.700-24-24V376c0-13.300 10.700-24 24-24h146.700l49 49c20.100 20.100 52.500 20.100 72.600 0l49-49H488c13.300 0 24 10.700 24 24zm-124 88c0-11-9-20-20-20s-20 9-20 20 9 20 20 20 20-9 20-20zm64 0c0-11-9-20-20-20s-20 9-20 20 9 20 20 20 20-9 20-20z"/></svg>
<div class="t " style="top:513px;font-size:13.2px;line-height:20px;color:#222;left:503px;width:143px;overflow:hidden;text-overflow:ellipsis;">test2</div>
<div class="t " style="top:513px;font-size:13.2px;line-height:20px;color:#222;left:671px;">Facture avoir</div>
<div class="t " style="top:513px;font-size:13.2px;line-height:20px;color:#222;left:709px;width:400px;text-align:center;">29/12/2025</div>
<div class="t " style="top:513px;font-size:13.2px;line-height:20px;color:#222;left:920px;width:400px;text-align:center;">29/12/2026</div>
<svg class="b" style="left:1224.2px;top:515.3px;" width="11.83" height="13.8" viewBox="0 0 120 140" fill="#6e65b1"><path d="M14 0h92a5 5 0 0 1 5 5v124h6a3 3 0 0 1 3 3v8H0v-8a3 3 0 0 1 3-3h6V5a5 5 0 0 1 5-5z"/><rect x="31" y="17" width="22" height="16" rx="2" fill="#fff"/><rect x="65" y="17" width="22" height="16" rx="2" fill="#fff"/><rect x="31" y="43" width="22" height="16" rx="2" fill="#fff"/><rect x="65" y="43" width="22" height="16" rx="2" fill="#fff"/><rect x="31" y="69" width="22" height="16" rx="2" fill="#fff"/><rect x="65" y="69" width="22" height="16" rx="2" fill="#fff"/><rect x="51" y="106" width="18" height="30" fill="#fff"/></svg>
<div class="t " style="top:513px;font-size:13.2px;line-height:20px;color:#0d2b3b;left:1239px;width:108px;overflow:hidden;text-overflow:ellipsis;">DAGARD (DAGARD)</div>
<div class="t " style="top:513px;font-size:13.2px;line-height:20px;color:#222;left:1368px;width:100px;overflow:hidden;text-overflow:ellipsis;"></div>
<div class="t " style="top:513px;font-size:13.2px;line-height:20px;color:#0f6a70;right:344px;text-align:right;">-228,71</div>
<div class="b" style="left:1789.3px;top:514px;width:65.5px;height:18.7px;background:#fff;border:1px solid #c4caca;border-radius:4px;"></div>
<div class="t " style="top:513px;font-size:12.5px;line-height:20px;color:#9a9a9a;font-weight:700;left:1621.9px;width:400px;text-align:center;">Brouillon</div>
<div class="b" style="left:272px;top:546px;width:1609px;height:44px;background:#ffffff;border-bottom:1px solid #e9e9e9;"></div>
<div class="b" style="left:298px;top:558px;width:14px;height:14px;background:#fff;border:1px solid #6f6f6f;border-radius:2.500px;"></div>
<svg class="b" style="left:350.6px;top:559.3px;" width="10.28" height="13.7" viewBox="0 0 120 160" fill="#4f9fb6"><path d="M8 0h64v36a8 8 0 0 0 8 8h40v108a8 8 0 0 1-8 8H8a8 8 0 0 1-8-8V8a8 8 0 0 1 8-8zM82 0l38 36H86a4 4 0 0 1-4-4z"/><path d="M35 84L83 134M83 84L35 134" stroke="#fff" stroke-width="17" fill="none"/></svg>
<div class="t " style="top:557px;font-size:13.2px;line-height:20px;color:#0d2b3b;left:364.3px;">FAF20250005</div>
<svg class="b" style="left:449.2265625px;top:559.4px;" width="13.5" height="13.5" viewBox="0 0 512 512" fill="#9a9a9a"><path d="M216 0h80c13.300 0 24 10.700 24 24v168h87.700c17.800 0 26.700 21.500 14.100 34.100L269.700 378.300c-7.500 7.500-19.800 7.500-27.300 0L90.100 226.100c-12.600-12.600-3.700-34.100 14.100-34.100H192V24c0-13.300 10.700-24 24-24zm296 376v112c0 13.300-10.700 24-24 24H24c-13.300 0-24-10.700-24-24V376c0-13.300 10.700-24 24-24h146.700l49 49c20.100 20.100 52.500 20.100 72.600 0l49-49H488c13.300 0 24 10.700 24 24zm-124 88c0-11-9-20-20-20s-20 9-20 20 9 20 20 20 20-9 20-20zm64 0c0-11-9-20-20-20s-20 9-20 20 9 20 20 20 20-9 20-20z"/></svg>
<div class="t " style="top:557px;font-size:13.2px;line-height:20px;color:#222;left:503px;width:143px;overflow:hidden;text-overflow:ellipsis;">test</div>
<div class="t " style="top:557px;font-size:13.2px;line-height:20px;color:#222;left:671px;">Facture avoir</div>
<div class="t " style="top:557px;font-size:13.2px;line-height:20px;color:#222;left:709px;width:400px;text-align:center;">29/12/2025</div>
<div class="t " style="top:557px;font-size:13.2px;line-height:20px;color:#222;left:920px;width:400px;text-align:center;">29/12/2026</div>
<svg class="b" style="left:1224.2px;top:559.3px;" width="11.83" height="13.8" viewBox="0 0 120 140" fill="#6e65b1"><path d="M14 0h92a5 5 0 0 1 5 5v124h6a3 3 0 0 1 3 3v8H0v-8a3 3 0 0 1 3-3h6V5a5 5 0 0 1 5-5z"/><rect x="31" y="17" width="22" height="16" rx="2" fill="#fff"/><rect x="65" y="17" width="22" height="16" rx="2" fill="#fff"/><rect x="31" y="43" width="22" height="16" rx="2" fill="#fff"/><rect x="65" y="43" width="22" height="16" rx="2" fill="#fff"/><rect x="31" y="69" width="22" height="16" rx="2" fill="#fff"/><rect x="65" y="69" width="22" height="16" rx="2" fill="#fff"/><rect x="51" y="106" width="18" height="30" fill="#fff"/></svg>
<div class="t " style="top:557px;font-size:13.2px;line-height:20px;color:#0d2b3b;left:1239px;width:108px;overflow:hidden;text-overflow:ellipsis;">DAGARD (DAGARD)</div>
<div class="t " style="top:557px;font-size:13.2px;line-height:20px;color:#222;left:1368px;width:100px;overflow:hidden;text-overflow:ellipsis;"></div>
<div class="t " style="top:557px;font-size:13.2px;line-height:20px;color:#0f6a70;right:344px;text-align:right;">-228,71</div>
<div class="b" style="left:1789.3px;top:558px;width:65.5px;height:18.7px;background:#fff;border:1px solid #c4caca;border-radius:4px;"></div>
<div class="t " style="top:557px;font-size:12.5px;line-height:20px;color:#9a9a9a;font-weight:700;left:1621.9px;width:400px;text-align:center;">Brouillon</div>
<div class="b" style="left:272px;top:590px;width:1609px;height:44px;background:#fcfcfc;border-bottom:1px solid #e9e9e9;"></div>
<div class="b" style="left:298px;top:602px;width:14px;height:14px;background:#fff;border:1px solid #6f6f6f;border-radius:2.500px;"></div>
<svg class="b" style="left:350.6px;top:603.3px;" width="10.28" height="13.7" viewBox="0 0 120 160" fill="#4f9fb6"><path d="M8 0h64v36a8 8 0 0 0 8 8h40v108a8 8 0 0 1-8 8H8a8 8 0 0 1-8-8V8a8 8 0 0 1 8-8zM82 0l38 36H86a4 4 0 0 1-4-4z"/><path d="M35 84L83 134M83 84L35 134" stroke="#fff" stroke-width="17" fill="none"/></svg>
<div class="t " style="top:601px;font-size:13.2px;line-height:20px;color:#0d2b3b;left:364.3px;">(PROV93)</div>
<svg class="b" style="left:427.18125000000003px;top:603.4px;" width="13.5" height="13.5" viewBox="0 0 512 512" fill="#9a9a9a"><path d="M216 0h80c13.300 0 24 10.700 24 24v168h87.700c17.800 0 26.700 21.500 14.100 34.100L269.700 378.300c-7.500 7.500-19.800 7.500-27.300 0L90.100 226.100c-12.600-12.600-3.700-34.100 14.100-34.100H192V24c0-13.300 10.700-24 24-24zm296 376v112c0 13.300-10.700 24-24 24H24c-13.300 0-24-10.700-24-24V376c0-13.300 10.700-24 24-24h146.700l49 49c20.100 20.100 52.500 20.100 72.600 0l49-49H488c13.300 0 24 10.700 24 24zm-124 88c0-11-9-20-20-20s-20 9-20 20 9 20 20 20 20-9 20-20zm64 0c0-11-9-20-20-20s-20 9-20 20 9 20 20 20 20-9 20-20z"/></svg>
<div class="t " style="top:601px;font-size:13.2px;line-height:20px;color:#222;left:503px;width:143px;overflow:hidden;text-overflow:ellipsis;">123</div>
<div class="t " style="top:601px;font-size:13.2px;line-height:20px;color:#222;left:671px;">Facture avoir</div>
<div class="t " style="top:601px;font-size:13.2px;line-height:20px;color:#222;left:709px;width:400px;text-align:center;">17/12/2025</div>
<div class="t " style="top:601px;font-size:13.2px;line-height:20px;color:#222;left:920px;width:400px;text-align:center;">17/12/2026</div>
<svg class="b" style="left:1224.2px;top:603.3px;" width="11.83" height="13.8" viewBox="0 0 120 140" fill="#6e65b1"><path d="M14 0h92a5 5 0 0 1 5 5v124h6a3 3 0 0 1 3 3v8H0v-8a3 3 0 0 1 3-3h6V5a5 5 0 0 1 5-5z"/><rect x="31" y="17" width="22" height="16" rx="2" fill="#fff"/><rect x="65" y="17" width="22" height="16" rx="2" fill="#fff"/><rect x="31" y="43" width="22" height="16" rx="2" fill="#fff"/><rect x="65" y="43" width="22" height="16" rx="2" fill="#fff"/><rect x="31" y="69" width="22" height="16" rx="2" fill="#fff"/><rect x="65" y="69" width="22" height="16" rx="2" fill="#fff"/><rect x="51" y="106" width="18" height="30" fill="#fff"/></svg>
<div class="t " style="top:601px;font-size:13.2px;line-height:20px;color:#0d2b3b;left:1239px;width:108px;overflow:hidden;text-overflow:ellipsis;">ACO</div>
<div class="t " style="top:601px;font-size:13.2px;line-height:20px;color:#222;left:1368px;width:100px;overflow:hidden;text-overflow:ellipsis;"></div>
<div class="t " style="top:601px;font-size:13.2px;line-height:20px;color:#0f6a70;right:344px;text-align:right;">-594,00</div>
<div class="b" style="left:1789.3px;top:602px;width:65.5px;height:18.7px;background:#fff;border:1px solid #c4caca;border-radius:4px;"></div>
<div class="t " style="top:601px;font-size:12.5px;line-height:20px;color:#9a9a9a;font-weight:700;left:1621.9px;width:400px;text-align:center;">Brouillon</div>
<div class="b" style="left:272px;top:634px;width:1609px;height:44px;background:#ffffff;border-bottom:1px solid #e9e9e9;"></div>
<div class="b" style="left:298px;top:646px;width:14px;height:14px;background:#fff;border:1px solid #6f6f6f;border-radius:2.500px;"></div>
<svg class="b" style="left:350.6px;top:647.3px;" width="10.28" height="13.7" viewBox="0 0 120 160" fill="#4f9fb6"><path d="M8 0h64v36a8 8 0 0 0 8 8h40v108a8 8 0 0 1-8 8H8a8 8 0 0 1-8-8V8a8 8 0 0 1 8-8zM82 0l38 36H86a4 4 0 0 1-4-4z"/><rect x="22" y="22" width="28" height="9" fill="#fff"/><rect x="22" y="42" width="28" height="9" fill="#fff"/><text x="62" y="134" font-family="Liberation Sans" font-weight="700" font-size="74" text-anchor="middle" fill="#fff">$</text><rect x="58.500" y="66" width="7" height="80" fill="#fff"/></svg>
<div class="t " style="top:645px;font-size:13.2px;line-height:20px;color:#0d2b3b;left:364.3px;">(PROV92)</div>
<div class="t " style="top:645px;font-size:13.2px;line-height:20px;color:#222;left:503px;width:143px;overflow:hidden;text-overflow:ellipsis;">Réception 20251128101951</div>
<div class="t " style="top:645px;font-size:13.2px;line-height:20px;color:#222;left:671px;">Facture standard</div>
<div class="t " style="top:645px;font-size:13.2px;line-height:20px;color:#222;left:709px;width:400px;text-align:center;">28/11/2025</div>
<div class="t " style="top:645px;font-size:13.2px;line-height:20px;color:#222;left:920px;width:400px;text-align:center;">28/11/2025</div>
<svg class="b" style="left:1224.2px;top:647.3px;" width="11.83" height="13.8" viewBox="0 0 120 140" fill="#6e65b1"><path d="M14 0h92a5 5 0 0 1 5 5v124h6a3 3 0 0 1 3 3v8H0v-8a3 3 0 0 1 3-3h6V5a5 5 0 0 1 5-5z"/><rect x="31" y="17" width="22" height="16" rx="2" fill="#fff"/><rect x="65" y="17" width="22" height="16" rx="2" fill="#fff"/><rect x="31" y="43" width="22" height="16" rx="2" fill="#fff"/><rect x="65" y="43" width="22" height="16" rx="2" fill="#fff"/><rect x="31" y="69" width="22" height="16" rx="2" fill="#fff"/><rect x="65" y="69" width="22" height="16" rx="2" fill="#fff"/><rect x="51" y="106" width="18" height="30" fill="#fff"/></svg>
<div class="t " style="top:645px;font-size:13.2px;line-height:20px;color:#0d2b3b;left:1239px;width:108px;overflow:hidden;text-overflow:ellipsis;">DAGARD (DAGARD)</div>
<div class="t " style="top:645px;font-size:13.2px;line-height:20px;color:#222;left:1368px;width:100px;overflow:hidden;text-overflow:ellipsis;"></div>
<div class="t " style="top:645px;font-size:13.2px;line-height:20px;color:#0f6a70;right:344px;text-align:right;">47,55</div>
<div class="b" style="left:1789.3px;top:646px;width:65.5px;height:18.7px;background:#fff;border:1px solid #c4caca;border-radius:4px;"></div>
<div class="t " style="top:645px;font-size:12.5px;line-height:20px;color:#9a9a9a;font-weight:700;left:1621.9px;width:400px;text-align:center;">Brouillon</div>
<div class="b" style="left:272px;top:678px;width:1609px;height:44px;background:#fff;border-bottom:1px solid #e0e0e0;"></div>
<div class="t " style="top:690px;font-size:13.2px;line-height:20px;color:#8a8a8a;left:282.4px;">Total</div>
<svg class="b" style="left:315.3px;top:694.3px;" width="10.7" height="10.7" viewBox="0 0 100 100" fill="#e2e2e2"><circle cx="50" cy="50" r="50"/><rect x="43" y="42" width="14" height="36" fill="#fff"/><circle cx="50" cy="27" r="8" fill="#fff"/></svg>
<div class="t " style="top:690px;font-size:13.2px;line-height:20px;color:#8a8a8a;right:344px;text-align:right;">3 569,06</div>
</main>
</div>
</body></html>
